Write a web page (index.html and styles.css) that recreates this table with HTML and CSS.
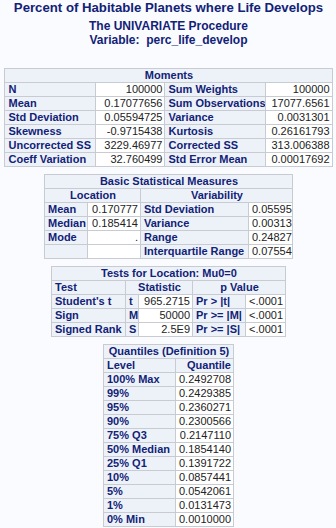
FILE: index.html
```html
<!DOCTYPE html>
<html>
<head>
<meta charset="utf-8">
<link rel="stylesheet" href="styles.css">
</head>
<body>
<div class="page">
  <div class="titles">
    <h1 class="title">Percent of Habitable Planets where Life Develops</h1>
    <div class="subtitle">The UNIVARIATE Procedure</div>
    <div class="subtitle">Variable:&nbsp; perc_life_develop</div>
  </div>

  <table class="tbl moments">
    <colgroup><col class="m1"><col class="m2"><col class="m3"><col class="m4"></colgroup>
    <tr><th class="cap" colspan="4">Moments</th></tr>
    <tr><th>N</th><td>100000</td><th>Sum Weights</th><td>100000</td></tr>
    <tr><th>Mean</th><td>0.17077656</td><th>Sum Observations</th><td>17077.6561</td></tr>
    <tr><th>Std Deviation</th><td>0.05594725</td><th>Variance</th><td>0.0031301</td></tr>
    <tr><th>Skewness</th><td>-0.9715438</td><th>Kurtosis</th><td>0.26161793</td></tr>
    <tr><th>Uncorrected SS</th><td>3229.46977</td><th>Corrected SS</th><td>313.006388</td></tr>
    <tr><th>Coeff Variation</th><td>32.760499</td><th>Std Error Mean</th><td>0.00017692</td></tr>
  </table>

  <table class="tbl basic">
    <colgroup><col class="b1"><col class="b2"><col class="b3"><col class="b4"></colgroup>
    <tr><th class="cap" colspan="4">Basic Statistical Measures</th></tr>
    <tr><th class="cap" colspan="2">Location</th><th class="cap" colspan="2">Variability</th></tr>
    <tr><th>Mean</th><td>0.170777</td><th>Std Deviation</th><td>0.05595</td></tr>
    <tr><th>Median</th><td>0.185414</td><th>Variance</th><td>0.00313</td></tr>
    <tr><th>Mode</th><td>.</td><th>Range</th><td>0.24827</td></tr>
    <tr><th></th><td></td><th>Interquartile Range</th><td>0.07554</td></tr>
  </table>

  <table class="tbl tests">
    <colgroup><col class="t1"><col class="t2"><col class="t3"><col class="t4"><col class="t5"></colgroup>
    <tr><th class="cap" colspan="5">Tests for Location: Mu0=0</th></tr>
    <tr><th>Test</th><th class="cap" colspan="2">Statistic</th><th class="cap" colspan="2">p Value</th></tr>
    <tr><th>Student's t</th><th>t</th><td>965.2715</td><th>Pr &gt; |t|</th><td>&lt;.0001</td></tr>
    <tr><th>Sign</th><th>M</th><td>50000</td><th>Pr &gt;= |M|</th><td>&lt;.0001</td></tr>
    <tr><th>Signed Rank</th><th>S</th><td>2.5E9</td><th>Pr &gt;= |S|</th><td>&lt;.0001</td></tr>
  </table>

  <table class="tbl quant">
    <colgroup><col class="q1"><col class="q2"></colgroup>
    <tr><th class="cap" colspan="2">Quantiles (Definition 5)</th></tr>
    <tr><th>Level</th><th class="right">Quantile</th></tr>
    <tr><th>100% Max</th><td>0.2492708</td></tr>
    <tr><th>99%</th><td>0.2429385</td></tr>
    <tr><th>95%</th><td>0.2360271</td></tr>
    <tr><th>90%</th><td>0.2300566</td></tr>
    <tr><th>75% Q3</th><td>0.2147110</td></tr>
    <tr><th>50% Median</th><td>0.1854140</td></tr>
    <tr><th>25% Q1</th><td>0.1391722</td></tr>
    <tr><th>10%</th><td>0.0857441</td></tr>
    <tr><th>5%</th><td>0.0542061</td></tr>
    <tr><th>1%</th><td>0.0131473</td></tr>
    <tr><th>0% Min</th><td>0.0010000</td></tr>
  </table>
</div>
</body>
</html>
```

FILE: styles.css
```css
html, body {
  margin: 0;
  padding: 0;
  background: #fafbfe;
}
body {
  font-family: "Liberation Sans", Arial, sans-serif;
  color: #112277;
}
.page {
  display: flex;
  flex-direction: column;
  align-items: center;
  padding-left: 1px;
}
.titles {
  display: flex;
  flex-direction: column;
  align-items: center;
  margin-bottom: 21px;
}
.title {
  margin: 0 0 3px 0;
  font-size: 13.2px;
  line-height: 16px;
  font-weight: bold;
  color: #112277;
}
.subtitle {
  font-size: 12px;
  line-height: 14px;
  font-weight: bold;
  color: #112277;
}
.tbl {
  border-collapse: collapse;
  table-layout: fixed;
  border: 1px solid #c1c1c1;
  margin-bottom: 7px;
  font-size: 11px;
}
.tbl th, .tbl td {
  border: 1px solid #c8ccd2;
  height: 13px;
  padding: 0 2px 0 3px;
  line-height: 13px;
  white-space: nowrap;
  overflow: hidden;
}
.tbl th {
  background: #edf2f9;
  color: #112277;
  font-weight: bold;
  text-align: left;
}
.tbl th.cap {
  text-align: center;
}
.tbl th.right {
  text-align: right;
}
.tbl td {
  background: #ffffff;
  color: #222222;
  text-align: right;
}
.moments { width: 327px; }
.m1 { width: 91px; }
.m2 { width: 69px; }
.m3 { width: 101px; }
.m4 { width: 66px; }
.basic { width: 248px; }
.b1 { width: 43px; }
.b2 { width: 53px; }
.b3 { width: 108px; }
.b4 { width: 44px; }
.tests { width: 234px; }
.t1 { width: 74px; }
.t2 { width: 13px; }
.t3 { width: 54px; }
.t4 { width: 53px; }
.t5 { width: 40px; }
.quant { width: 130px; }
.q1 { width: 72px; }
.q2 { width: 58px; }
```
